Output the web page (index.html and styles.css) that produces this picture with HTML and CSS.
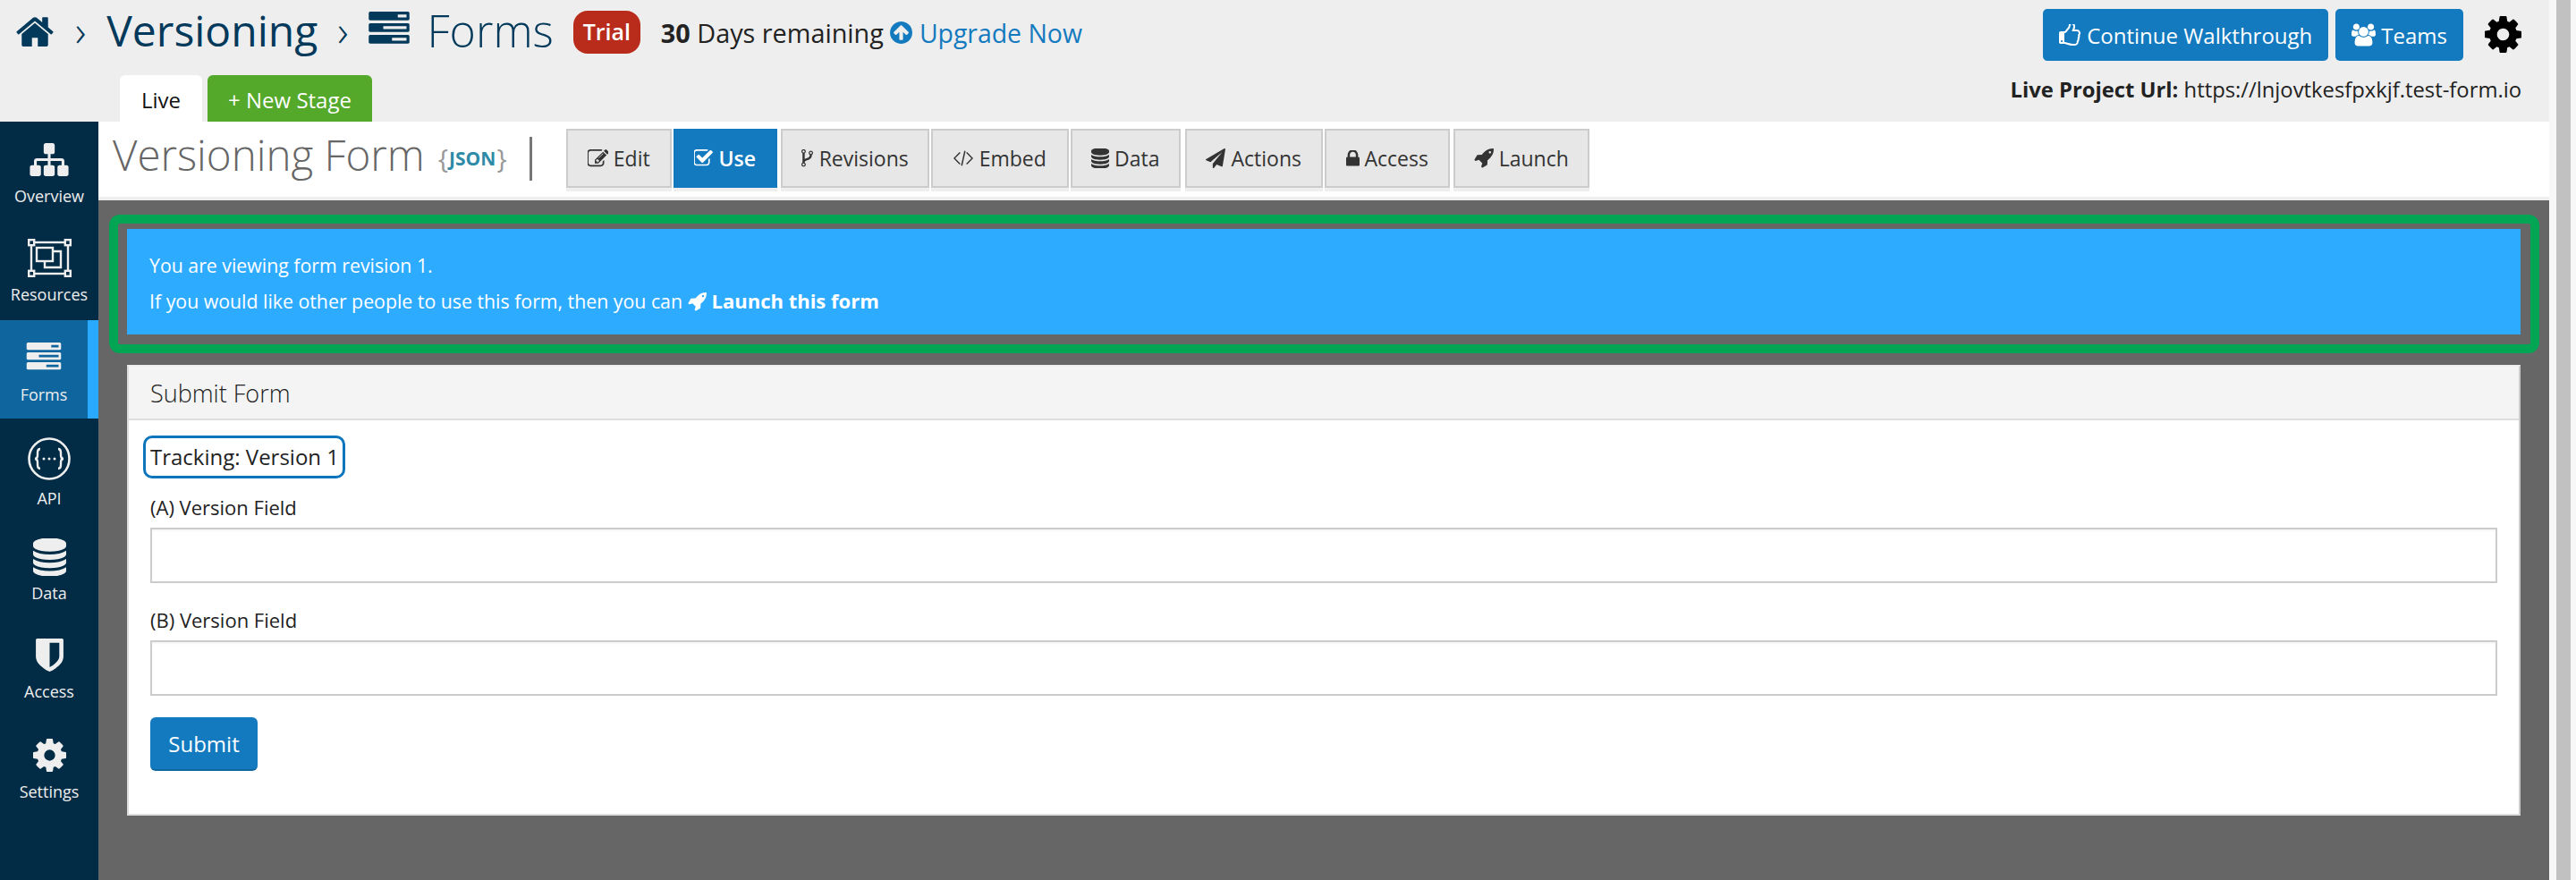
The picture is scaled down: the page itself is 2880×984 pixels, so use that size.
FILE: index.html
```html
<!DOCTYPE html>
<html lang="en">
<head>
    <meta charset="UTF-8">
    <title>Versioning Form</title>
    <link rel="stylesheet" href="styles.css">
</head>
<body>
    <svg class="sprite" xmlns="http://www.w3.org/2000/svg">
        <symbol id="i-home" viewBox="0 128 1792 1408"><path d="M1472 992v480q0 26-19 45t-45 19h-384v-384h-256v384h-384q-26 0-45-19t-19-45v-480q0-1 .5-3t.5-3l575-474 575 474q1 2 1 6zm223-69l-62 74q-8 9-21 11h-3q-13 0-21-7l-692-577-692 577q-12 8-24 7-13-2-21-11l-62-74q-8-10-7-23.5t11-21.5l719-599q32-26 76-26t76 26l244 204v-195q0-14 9-23t23-9h192q14 0 23 9t9 23v408l219 182q10 8 11 21.5t-7 23.5z"/></symbol>
        <symbol id="i-tasks" viewBox="0 128 1792 1536"><path d="M1024 1408h640v-128h-640v128zm-384-512h1024v-128h-1024v128zm640-512h384v-128h-384v128zm512 832v256q0 26-19 45t-45 19h-1664q-26 0-45-19t-19-45v-256q0-26 19-45t45-19h1664q26 0 45 19t19 45zm0-512v256q0 26-19 45t-45 19h-1664q-26 0-45-19t-19-45v-256q0-26 19-45t45-19h1664q26 0 45 19t19 45zm0-512v256q0 26-19 45t-45 19h-1664q-26 0-45-19t-19-45v-256q0-26 19-45t45-19h1664q26 0 45 19t19 45z"/></symbol>
        <symbol id="i-sitemap" viewBox="0 128 1792 1536"><path d="M1792 1248v320q0 40-28 68t-68 28h-320q-40 0-68-28t-28-68v-320q0-40 28-68t68-28h96v-192h-512v192h96q40 0 68 28t28 68v320q0 40-28 68t-68 28h-320q-40 0-68-28t-28-68v-320q0-40 28-68t68-28h96v-192h-512v192h96q40 0 68 28t28 68v320q0 40-28 68t-68 28h-320q-40 0-68-28t-28-68v-320q0-40 28-68t68-28h96v-192q0-52 38-90t90-38h512v-192h-96q-40 0-68-28t-28-68v-320q0-40 28-68t68-28h320q40 0 68 28t28 68v320q0 40-28 68t-68 28h-96v192h512q52 0 90 38t38 90v192h96q40 0 68 28t28 68z"/></symbol>
        <symbol id="i-database" viewBox="128 128 1536 1536"><path d="M896 768q237 0 443-43t325-127v170q0 69-103 128t-280 93.5-385 34.5-385-34.5-280-93.5-103-128v-170q119 84 325 127t443 43zm0 768q237 0 443-43t325-127v170q0 69-103 128t-280 93.5-385 34.5-385-34.5-280-93.5-103-128v-170q119 84 325 127t443 43zm0-384q237 0 443-43t325-127v170q0 69-103 128t-280 93.5-385 34.5-385-34.5-280-93.5-103-128v-170q119 84 325 127t443 43zm0-1152q208 0 385 34.5t280 93.5 103 128v128q0 69-103 128t-280 93.5-385 34.5-385-34.5-280-93.5-103-128v-128q0-69 103-128t280-93.5 385-34.5z"/></symbol>
        <symbol id="i-shield" viewBox="256 128 1280 1536"><path d="M1344 960v-640h-448v1137q119-63 213-137 235-184 235-360zm192-768v768q0 86-33.5 170.5t-83 150-118 127.5-126.5 103-121 77.5-89.5 49.5-42.5 20q-12 6-26 6t-26-6q-16-7-42.5-20t-89.5-49.5-121-77.5-126.5-103-118-127.5-83-150-33.5-170.5v-768q0-26 19-45t45-19h1152q26 0 45 19t19 45z"/></symbol>
        <symbol id="i-cog" viewBox="128 128 1536 1536"><path d="M1152 896q0-106-75-181t-181-75-181 75-75 181 75 181 181 75 181-75 75-181zm512-109v222q0 12-8 23t-20 13l-185 28q-19 54-39 91 35 50 107 138 10 12 10 25t-9 23q-27 37-99 108t-94 71q-12 0-26-9l-138-108q-44 23-91 38-16 136-29 186-7 28-36 28h-222q-14 0-24.5-8.5t-11.5-21.5l-28-184q-49-16-90-37l-141 107q-10 9-25 9-14 0-25-11-126-114-165-168-7-10-7-23 0-12 8-23 15-21 51-66.5t54-70.5q-27-50-41-99l-183-27q-13-2-21-12.5t-8-23.5v-222q0-12 8-23t19-13l186-28q14-46 39-92-40-57-107-138-10-12-10-24 0-10 9-23 26-36 98.5-107.5t94.5-71.5q13 0 26 10l138 107q44-23 91-38 16-136 29-186 7-28 36-28h222q14 0 24.5 8.5t11.5 21.5l28 184q49 16 90 37l142-107q9-9 24-9 13 0 25 10 129 119 165 170 7 8 7 22 0 12-8 23-15 21-51 66.5t-54 70.5q26 50 41 98l183 28q13 2 21 12.5t8 23.5z"/></symbol>
        <symbol id="i-lock" viewBox="320 192 1152 1376"><path d="M640 768h512v-192q0-106-75-181t-181-75-181 75-75 181v192zm832 96v576q0 40-28 68t-68 28h-960q-40 0-68-28t-28-68v-576q0-40 28-68t68-28h32v-192q0-184 132-316t316-132 316 132 132 316v192h32q40 0 68 28t28 68z"/></symbol>
        <symbol id="i-plane" viewBox="0 0 1792 1792"><path d="M1764 11q33 24 27 64l-256 1536q-5 29-32 45-14 8-31 8-11 0-24-5l-453-185-242 295q-18 23-49 23-13 0-22-4-19-7-30.5-23.5t-11.5-36.5v-349l864-1059-1069 925-395-162q-37-14-40-55-2-40 32-59l1664-960q15-9 32-9 20 0 36 11z"/></symbol>
        <symbol id="i-rocket" viewBox="64 128 1664 1664"><path d="M1504 448q0-40-28-68t-68-28-68 28-28 68 28 68 68 28 68-28 28-68zm224-288q0 249-75.5 430.5t-253.5 360.5q-81 80-195 176l-20 379q-2 16-16 26l-384 224q-7 4-16 4-12 0-23-9l-64-64q-13-14-8-32l85-276-281-281-276 85q-3 1-9 1-14 0-23-9l-64-64q-17-19-5-39l224-384q10-14 26-16l379-20q96-114 176-195 188-187 358-258t431-71q14 0 24 9.5t10 22.5z"/></symbol>
        <symbol id="i-check" viewBox="128 128 1600 1536"><path d="M1472 930v318q0 119-84.5 203.5t-203.5 84.5h-832q-119 0-203.5-84.5t-84.5-203.5v-832q0-119 84.5-203.5t203.5-84.5h832q63 0 117 25 15 7 18 23 3 17-9 29l-49 49q-10 10-23 10-3 0-9-2-23-6-45-6h-832q-66 0-113 47t-47 113v832q0 66 47 113t113 47h832q66 0 113-47t47-113v-254q0-13 9-22l64-64q10-10 23-10 6 0 12 3 20 8 20 29zm231-489l-814 814q-24 24-57 24t-57-24l-430-430q-24-24-24-57t24-57l110-110q24-24 57-24t57 24l263 263 647-647q24-24 57-24t57 24l110 110q24 24 24 57t-24 57z"/></symbol>
        <symbol id="i-edit" viewBox="64 128 1664 1536"><path d="M888 1184l116-116-152-152-116 116v56h96v96h56zm440-720q-16-16-33 1l-350 350q-17 17-1 33t33-1l350-350q17-17 1-33zm80 594v190q0 119-84.5 203.5t-203.5 84.5h-832q-119 0-203.5-84.5t-84.5-203.5v-832q0-119 84.5-203.5t203.5-84.5h832q63 0 117 25 15 7 18 23 3 17-9 29l-49 49q-14 14-32 8-23-6-45-6h-832q-66 0-113 47t-47 113v832q0 66 47 113t113 47h832q66 0 113-47t47-113v-126q0-13 9-22l64-64q15-15 35-7t20 29zm-96-738l288 288-672 672h-288v-288zm444 132l-92 92-288-288 92-92q28-28 68-28t68 28l152 152q28 28 28 68t-28 68z"/></symbol>
        <symbol id="i-fork" viewBox="256 128 1024 1536"><path d="M544 1440q0-40-28-68t-68-28-68 28-28 68 28 68 68 28 68-28 28-68zm0-1152q0-40-28-68t-68-28-68 28-28 68 28 68 68 28 68-28 28-68zm640 128q0-40-28-68t-68-28-68 28-28 68 28 68 68 28 68-28 28-68zm96 0q0 52-26 96.5t-70 69.5q-2 287-226 414-67 38-203 81-128 40-169.5 71t-41.5 100v26q44 25 70 69.5t26 96.5q0 80-56 136t-136 56-136-56-56-136q0-52 26-96.5t70-69.5v-820q-44-25-70-69.5t-26-96.5q0-80 56-136t136-56 136 56 56 136q0 52-26 96.5t-70 69.5v497q54-26 154-57 55-17 87.5-29.5t70.5-31 59-39.5 40.5-51 28-69.5 8.5-91.5q-44-25-70-69.5t-26-96.5q0-80 56-136t136-56 136 56 56 136z"/></symbol>
        <symbol id="i-thumb" viewBox="128 128 1536 1536"><path d="M384 1344q0-26-19-45t-45-19-45 19-19 45 19 45 45 19 45-19 19-45zm1152-576q0-51-39-89.5t-89-38.5h-352q0-58 48-159.5t48-160.5q0-98-32-145t-128-47q-26 26-38 85t-30.5 125.5-59.5 109.5q-22 23-77 91-4 5-23 30t-31.5 41-34.5 42.5-40 44-38.5 35.5-40 27-35.5 9h-32v640h32q13 0 31.5 3t33 6.5 38 11 35 11.5 35.5 12.5 29 10.5q211 73 342 73h121q192 0 192-167 0-26-5-56 30-16 47.5-52.5t17.5-73.5-18-69q53-50 53-119 0-25-10-55.5t-25-47.5q32-1 53.5-47t21.5-81zm128-1q0 89-49 163 9 33 9 69 0 77-38 144 3 21 3 43 0 101-60 178 1 139-85 219.5t-227 80.5h-129q-96 0-189.5-22.5t-216.5-65.5q-116-40-138-40h-288q-53 0-90.5-37.5t-37.5-90.5v-640q0-53 37.5-90.5t90.5-37.5h274q36-24 137-155 58-75 107-128 24-25 35.5-85.5t30.5-126.5 62-108q39-37 90-37 84 0 151 32.5t102 101.5 35 186q0 93-48 192h176q104 0 180 76t76 179z"/></symbol>
        <symbol id="i-users" viewBox="0 0 1920 1792"><path d="M593 896q-162 5-265 128h-134q-82 0-138-40.5t-56-118.5q0-353 124-353 6 0 43.5 21t97.5 42.5 119 21.5q67 0 133-23-5 37-5 66 0 139 81 256zm1071 637q0 120-73 189.5t-194 69.5h-874q-121 0-194-69.5t-73-189.5q0-53 3.5-103.5t14-109 26.5-108.5 43-97.5 62-81 85.5-53.5 111.5-20q10 0 43 21.5t73 48 107 48 135 21.5 135-21.5 107-48 73-48 43-21.5q61 0 111.5 20t85.5 53.5 62 81 43 97.5 26.5 108.5 14 109 3.5 103.5zm-1024-1277q0 106-75 181t-181 75-181-75-75-181 75-181 181-75 181 75 75 181zm704 384q0 159-112.5 271.5t-271.5 112.5-271.5-112.5-112.5-271.5 112.5-271.5 271.5-112.5 271.5 112.5 112.5 271.5zm576 225q0 78-56 118.5t-138 40.5h-134q-103-123-265-128 81-117 81-256 0-29-5-66 66 23 133 23 59 0 119-21.5t97.5-42.5 43.5-21q124 0 124 353zm-128-609q0 106-75 181t-181 75-181-75-75-181 75-181 181-75 181 75 75 181z"/></symbol>
        <symbol id="i-up" viewBox="128 128 1536 1536"><path d="M1412 897q0-27-18-45l-91-91-362-362q-18-18-45-18t-45 18l-362 362-91 91q-18 18-18 45t18 45l91 91q18 18 45 18t45-18l189-189v502q0 26 19 45t45 19h128q26 0 45-19t19-45v-502l189 189q19 19 45 19t45-19l91-91q18-18 18-45zm252-1q0 209-103 385.5t-279.5 279.5-385.5 103-385.5-103-279.5-279.5-103-385.5 103-385.5 279.5-279.5 385.5-103 385.5 103 279.5 279.5 103 385.5z"/></symbol>
        <symbol id="i-code" viewBox="0 0 24 24"><path d="M8 5 1 12l7 7M16 5l7 7-7 7M14 3l-4 18" fill="none" stroke="currentColor" stroke-width="1.6"/></symbol>
        <symbol id="i-resources" viewBox="0 0 49 43"><g fill="none" stroke="currentColor" stroke-width="2.4"><rect x="4" y="4" width="41" height="35"/><rect x="10" y="10" width="18" height="15" /><path d="M28 14h9v18H19v-7"/></g><g fill="#022b45" stroke="currentColor" stroke-width="2.4"><rect x="1.2" y="1.2" width="6" height="6"/><rect x="41.8" y="1.2" width="6" height="6"/><rect x="1.2" y="35.8" width="6" height="6"/><rect x="41.8" y="35.8" width="6" height="6"/></g></symbol>
        <symbol id="i-api" viewBox="0 0 48 48"><circle cx="24" cy="24" r="22.5" fill="none" stroke="currentColor" stroke-width="2.6"/><path d="M14 13c-3 0-3 2-3 4v3c0 2-1 4-3 4 2 0 3 2 3 4v3c0 2 0 4 3 4M34 13c3 0 3 2 3 4v3c0 2 1 4 3 4-2 0-3 2-3 4v3c0 2 0 4-3 4" fill="none" stroke="currentColor" stroke-width="2.4"/><circle cx="18" cy="24" r="1.5" fill="currentColor"/><circle cx="24" cy="24" r="1.5" fill="currentColor"/><circle cx="30" cy="24" r="1.5" fill="currentColor"/></symbol>
    </svg>

    <div class="page">
        <header class="topbar">
            <div class="topbar-left">
                <div class="crumbs">
                    <svg class="crumb-home"><use href="#i-home"/></svg>
                    <span class="crumb-sep crumb-sep-first">›</span>
                    <span class="crumb-project">Versioning</span>
                    <span class="crumb-sep">›</span>
                    <svg class="crumb-forms"><use href="#i-tasks"/></svg>
                    <span class="crumb-section">Forms</span>
                    <span class="trial-badge">Trial</span>
                    <span class="days"><b>30</b> Days remaining</span>
                    <a class="upgrade"><svg class="upgrade-icon"><use href="#i-up"/></svg>Upgrade Now</a>
                </div>
                <div class="stages">
                    <a class="stage stage-live">Live</a>
                    <a class="stage stage-new">+ New Stage</a>
                </div>
            </div>
            <div class="topbar-right">
                <div class="top-actions">
                    <a class="top-btn"><svg class="icon-thumb"><use href="#i-thumb"/></svg>Continue Walkthrough</a>
                    <a class="top-btn top-btn-teams"><svg class="icon-users"><use href="#i-users"/></svg>Teams</a>
                    <svg class="top-gear"><use href="#i-cog"/></svg>
                </div>
                <div class="project-url"><b>Live Project Url:</b> https://lnjovtkesfpxkjf.test-form.io</div>
            </div>
        </header>

        <div class="main">
            <nav class="sidebar">
                <a class="nav-item nav-overview"><svg><use href="#i-sitemap"/></svg><span>Overview</span></a>
                <a class="nav-item nav-resources"><svg><use href="#i-resources"/></svg><span>Resources</span></a>
                <a class="nav-item nav-forms active"><svg><use href="#i-tasks"/></svg><span>Forms</span></a>
                <a class="nav-item nav-api"><svg><use href="#i-api"/></svg><span>API</span></a>
                <a class="nav-item nav-data"><svg><use href="#i-database"/></svg><span>Data</span></a>
                <a class="nav-item nav-access"><svg><use href="#i-shield"/></svg><span>Access</span></a>
                <a class="nav-item nav-settings"><svg><use href="#i-cog"/></svg><span>Settings</span></a>
            </nav>

            <div class="content">
                <div class="title-bar">
                    <h1 class="form-title">Versioning Form</h1>
                    <span class="json-tag"><i>{</i><b>JSON</b><i>}</i></span>
                    <span class="title-divider"></span>
                    <div class="form-tabs">
                        <a class="form-tab tab-edit"><svg class="tab-icon icon-edit"><use href="#i-edit"/></svg>Edit</a>
                        <a class="form-tab tab-use active"><svg class="tab-icon icon-check"><use href="#i-check"/></svg>Use</a>
                        <a class="form-tab tab-revisions"><svg class="tab-icon icon-fork"><use href="#i-fork"/></svg>Revisions</a>
                        <a class="form-tab tab-embed"><svg class="tab-icon icon-code"><use href="#i-code"/></svg>Embed</a>
                        <a class="form-tab tab-data"><svg class="tab-icon icon-db"><use href="#i-database"/></svg>Data</a>
                        <a class="form-tab tab-actions"><svg class="tab-icon icon-plane"><use href="#i-plane"/></svg>Actions</a>
                        <a class="form-tab tab-access"><svg class="tab-icon icon-lock"><use href="#i-lock"/></svg>Access</a>
                        <a class="form-tab tab-launch"><svg class="tab-icon icon-rocket"><use href="#i-rocket"/></svg>Launch</a>
                    </div>
                </div>

                <div class="workspace">
                    <div class="highlight">
                        <div class="notice">
                            <p>You are viewing form revision 1.</p>
                            <p>If you would like other people to use this form, then you can <a class="notice-link"><svg class="notice-rocket"><use href="#i-rocket"/></svg>Launch this form</a></p>
                        </div>
                    </div>

                    <section class="card">
                        <div class="card-head">Submit Form</div>
                        <div class="card-body">
                            <div class="tracking">Tracking: Version 1</div>
                            <label class="field-label" for="fieldA">(A) Version Field</label>
                            <input class="field-input" id="fieldA" type="text">
                            <label class="field-label field-label-b" for="fieldB">(B) Version Field</label>
                            <input class="field-input" id="fieldB" type="text">
                            <button class="submit-btn" type="button">Submit</button>
                        </div>
                    </section>
                </div>
            </div>
        </div>
    </div>

    <div class="scroll-strip"><div class="scroll-thumb"></div></div>
</body>
</html>
```

FILE: styles.css
```css
* {
    box-sizing: border-box;
}
html, body {
    margin: 0;
    height: 984px;
    overflow: hidden;
}
body {
    display: flex;
    font-family: "Open Sans", sans-serif;
    font-size: 24px;
    color: #222;
    background: #f7f7f7;
}
.sprite {
    display: none;
}
svg {
    display: block;
    fill: currentColor;
    flex: none;
}
p {
    margin: 0;
}
.page {
    width: 2850px;
    height: 984px;
    overflow: hidden;
    flex: none;
}
.scroll-strip {
    flex: 1;
    padding: 0 6px 0 8px;
}
.scroll-thumb {
    height: 100%;
    background: #c1c1c1;
}

/* top bar */
.topbar {
    height: 136px;
    background: #eee;
    display: flex;
    justify-content: space-between;
}
.topbar-left {
    padding-left: 16px;
}
.crumbs {
    height: 84px;
    padding-bottom: 17px;
    display: flex;
    align-items: center;
    color: #03395a;
}
.crumb-home {
    width: 46px;
    height: 36px;
}
.crumb-sep {
    margin: 0 21px 0 22px;
    font-size: 48px;
    font-weight: 300;
}
.crumb-sep-first {
    margin-right: 23px;
}
.crumb-project {
    font-size: 48px;
    font-weight: 400;
}
.crumb-forms {
    width: 50px;
    height: 39px;
    margin: 0 17px 2px 0;
}
.crumb-section {
    font-size: 50px;
    font-weight: 300;
}
.trial-badge {
    margin: 5px 0 0 22px;
    width: 75px;
    height: 48px;
    line-height: 46px;
    text-align: center;
    border-radius: 16px;
    background: #b92c1c;
    color: #fff;
    font-size: 25px;
    font-weight: 600;
}
.days {
    margin: 6px 0 0 23px;
    font-size: 28.8px;
    color: #222;
}
.upgrade {
    display: flex;
    align-items: center;
    margin: 6px 0 0 7px;
    font-size: 28.4px;
    color: #137abf;
}
.upgrade-icon {
    width: 25px;
    height: 25px;
    margin-right: 8px;
}
.stages {
    display: flex;
    padding-left: 118px;
    height: 52px;
}
.stage {
    height: 52px;
    line-height: 56px;
    text-align: center;
    border-radius: 6px 6px 0 0;
}
.stage-live {
    width: 92px;
    background: #fff;
    color: #111;
}
.stage-new {
    width: 184px;
    margin-left: 6px;
    background: #54a92a;
    color: #fff;
}
.topbar-right {
    padding: 10px 31px 0 0;
}
.top-actions {
    display: flex;
    justify-content: flex-end;
    align-items: flex-start;
}
.top-btn {
    display: flex;
    align-items: center;
    height: 58px;
    padding: 0 18px;
    border-radius: 5px;
    background: #137abf;
    color: #fff;
    font-size: 24px;
    font-weight: 500;
}
.top-btn-teams {
    margin-left: 8px;
}
.icon-thumb {
    width: 24px;
    height: 24px;
    margin-right: 7px;
}
.icon-users {
    width: 27px;
    height: 28px;
    margin-right: 6px;
}
.top-gear {
    width: 41px;
    height: 41px;
    margin: 8px 0 0 24px;
    color: #000;
}
.project-url {
    margin-top: 15px;
    text-align: right;
    font-size: 23.8px;
    line-height: 34px;
}
.main {
    display: flex;
    height: 848px;
}

/* sidebar */
.sidebar {
    width: 110px;
    flex: none;
    background: #022b45;
    color: #eee;
    font-size: 18px;
    font-weight: 500;
}
.nav-item {
    display: flex;
    flex-direction: column;
    align-items: center;
    justify-content: flex-end;
    padding-bottom: 17px;
}
.nav-item span {
    line-height: 24px;
}
.nav-item.active {
    background: #0f669f;
    border-right: 12px solid #29a9ff;
    padding-bottom: 15px;
}
.nav-overview { height: 112px; }
.nav-overview svg { width: 44px; height: 37px; margin-bottom: 10px; }
.nav-resources { height: 110px; }
.nav-resources svg { width: 49px; height: 43px; margin-bottom: 7px; }
.nav-forms { height: 110px; }
.nav-forms svg { width: 44px; height: 33px; margin-bottom: 13px; }
.nav-api { height: 118px; }
.nav-api svg { width: 48px; height: 48px; margin-bottom: 8px; }
.nav-data { height: 106px; }
.nav-data svg { width: 37px; height: 42px; margin-bottom: 7px; }
.nav-access { height: 110px; }
.nav-access svg { width: 31px; height: 37px; margin-bottom: 10px; }
.nav-settings { height: 112px; }
.nav-settings svg { width: 37px; height: 37px; margin-bottom: 10px; }

/* title row */
.content {
    flex: 1;
    min-width: 0;
}
.title-bar {
    height: 88px;
    border-bottom: 4px solid #eee;
    background: #fff;
    padding-left: 16px;
    display: flex;
    align-items: flex-start;
}
.form-title {
    margin: 0;
    font-size: 47.5px;
    font-weight: 300;
    line-height: 74px;
    color: #666;
}
.json-tag {
    margin: 23px 0 0 15px;
    width: 77px;
    justify-content: space-between;
    font-size: 30px;
    line-height: 36px;
    display: flex;
    align-items: center;
}
.json-tag i {
    font-style: normal;
    color: #999;
}
.json-tag b {
    font-size: 21px;
    font-weight: 700;
    color: #2e8ba8;
}
.title-divider {
    width: 3px;
    height: 49px;
    margin: 17px 0 0 25px;
    background: #777;
}
.form-tabs {
    display: flex;
    margin: 8px 0 0 38px;
}
.form-tab {
    display: flex;
    align-items: center;
    justify-content: center;
    height: 66px;
    border: 2px solid #ccc;
    box-shadow: 0 4px 0 #eee;
    background: #e7e7e7;
    color: #333;
    font-size: 23px;
}
.tab-edit { width: 118px; }
.tab-use { width: 116px; margin-left: 2px; }
.tab-revisions { width: 166px; margin-left: 4px; }
.tab-embed { width: 154px; margin-left: 2px; }
.tab-data { width: 123px; margin-left: 2px; }
.tab-actions { width: 154px; margin-left: 5px; }
.tab-access { width: 140px; margin-left: 2px; }
.tab-launch { width: 152px; margin-left: 4px; }
.form-tab.active {
    background: #137abf;
    border-color: #137abf;
    color: #fff;
    font-weight: 600;
}
.tab-icon {
    margin-right: 6px;
}
.icon-edit { width: 23px; height: 21px; }
.icon-check { width: 21px; height: 20px; }
.icon-fork { width: 13px; height: 20px; margin-right: 7px; }
.icon-code { width: 22px; height: 22px; margin-right: 7px; }
.icon-db { width: 20px; height: 22px; }
.icon-plane { width: 22px; height: 22px; }
.icon-lock { width: 15px; height: 18px; }
.icon-rocket { width: 22px; height: 22px; }

/* work area */
.workspace {
    height: 760px;
    background: #666;
    padding: 16px 11px 0 12px;
}
.highlight {
    border: 10px solid #01a553;
    border-radius: 12px;
    padding: 6px 11px 11px 10px;
}
.notice {
    height: 118px;
    padding: 22px 25px 0;
    background: #2dabff;
    color: #fff;
    font-size: 21.3px;
    line-height: 38.5px;
}
.notice-link {
    font-size: 22px;
    font-weight: 700;
}
.notice-rocket {
    display: inline-block;
    width: 21px;
    height: 21px;
    margin-right: 6px;
    vertical-align: -3px;
}
.card {
    margin: 13px 21px 0 20px;
    height: 504px;
    border: 2px solid #ddd;
    border-color: #eee #ccc #ddd #ddd;
    background: #fff;
}
.card-head {
    height: 60px;
    padding-left: 24px;
    line-height: 60px;
    background: #f4f4f4;
    border-bottom: 2px solid #ddd;
    font-size: 27px;
    font-weight: 300;
}
.card-body {
    padding: 17px 24px 0;
}
.tracking {
    display: inline-block;
    margin: 0 0 17px -8px;
    padding: 0 4px 0 5px;
    height: 48px;
    line-height: 42px;
    border: 3px solid #0c75bb;
    border-radius: 10px;
    vertical-align: top;
}
.field-label {
    display: block;
    margin-bottom: 8px;
    font-size: 22px;
    line-height: 30px;
}
.field-label-b {
    margin-top: 26px;
}
.field-input {
    display: block;
    width: 100%;
    height: 62px;
    margin: 0;
    border: 2px solid #ccc;
    border-radius: 0;
    box-shadow: inset 0 2px 2px rgba(0, 0, 0, .04);
    background: #fff;
    outline: none;
}
.submit-btn {
    display: block;
    width: 120px;
    height: 60px;
    margin-top: 24px;
    padding: 0;
    border: 0;
    border-bottom: 2px solid #0f669f;
    border-radius: 6px;
    background: #137abf;
    color: #fff;
    font-family: inherit;
    font-size: 24px;
    font-weight: 500;
}
```
